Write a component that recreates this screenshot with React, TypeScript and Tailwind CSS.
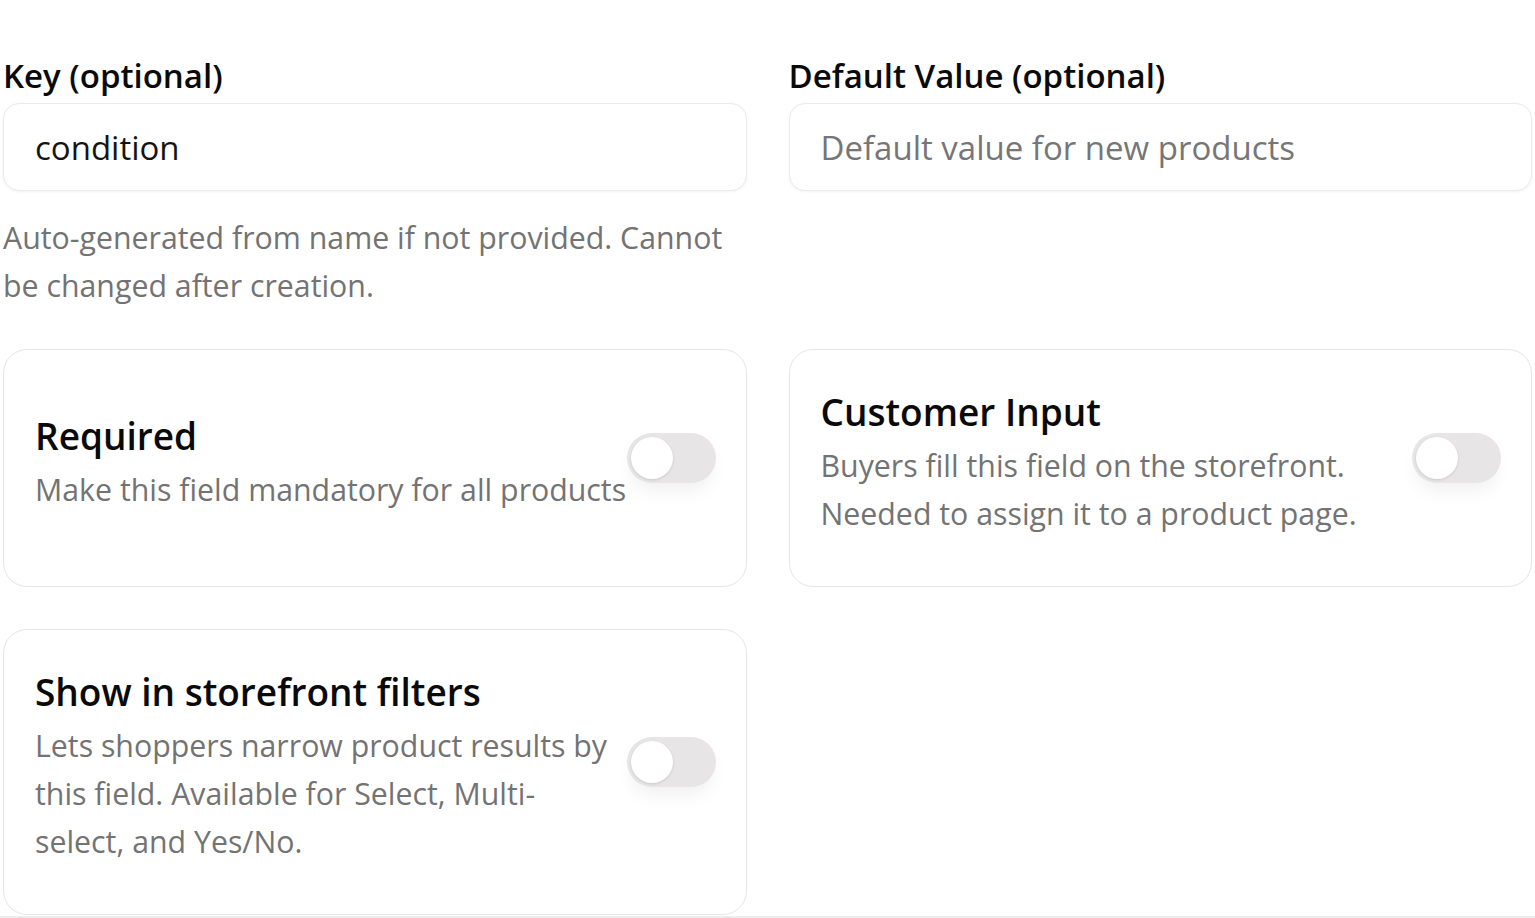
import React from "react";

type ToggleCardProps = {
  title: string;
  description: string;
  descClassName?: string;
};

function Toggle() {
  return (
    <button
      type="button"
      role="switch"
      aria-checked={false}
      className="relative -mt-[10px] h-[50px] w-[89px] shrink-0 rounded-full bg-[#e7e5e6] shadow-[0_12px_18px_-4px_rgba(0,0,0,0.06)]"
    >
      <span className="absolute left-[4px] top-[4px] h-[42px] w-[42px] rounded-full bg-white shadow-[0_1px_3px_rgba(0,0,0,0.12)]" />
    </button>
  );
}

function ToggleCard({ title, description, descClassName }: ToggleCardProps) {
  return (
    <div className="flex items-center rounded-[24px] border border-[#e6e6e6] bg-white pl-[31px] pr-[30px] pt-[38px] pb-[48px]">
      <div className="min-w-0 flex-1">
        <p className="text-[37px] font-semibold leading-[48px] text-[#0a0a0a]">{title}</p>
        <p className={`mt-[6px] text-[30.3px] leading-[48px] text-[#737373] ${descClassName ?? ""}`}>
          {description}
        </p>
      </div>
      <Toggle />
    </div>
  );
}

function Field({
  label,
  value,
  placeholder,
  helper,
}: {
  label: string;
  value?: string;
  placeholder?: string;
  helper?: string;
}) {
  return (
    <div className={helper ? "-mb-[3px]" : ""}>
      <label className="block text-[33px] font-semibold leading-[40px] text-[#0a0a0a]">{label}</label>
      <input
        defaultValue={value}
        placeholder={placeholder}
        className="mt-[7px] h-[88px] w-full rounded-[16px] border border-[#ebebeb] bg-white px-[31px] text-[33px] text-[#141414] shadow-[0_1px_3px_rgba(0,0,0,0.05)] outline-none placeholder:text-[#767676]"
      />
      {helper && <p className="mt-[23px] text-[30.3px] leading-[48px] text-[#737373]">{helper}</p>}
    </div>
  );
}

export default function App() {
  return (
    <div className="min-h-screen bg-white font-['Open_Sans','Noto_Sans',sans-serif]">
      <div className="grid grid-cols-2 gap-x-[42px] gap-y-[42px] px-[3px] pt-[56px]">
        <Field
          label="Key (optional)"
          value="condition"
          helper="Auto-generated from name if not provided. Cannot be changed after creation."
        />
        <Field label="Default Value (optional)" placeholder="Default value for new products" />

        <ToggleCard title="Required" description="Make this field mandatory for all products" />
        <ToggleCard
          title="Customer Input"
          description="Buyers fill this field on the storefront. Needed to assign it to a product page."
        />
        <ToggleCard
          title="Show in storefront filters"
          description="Lets shoppers narrow product results by this field. Available for Select, Multi-select, and Yes/No."
          descClassName="max-w-[578px]"
        />
      </div>
      <div className="mt-px border-t-2 border-[#ececec]" />
    </div>
  );
}
